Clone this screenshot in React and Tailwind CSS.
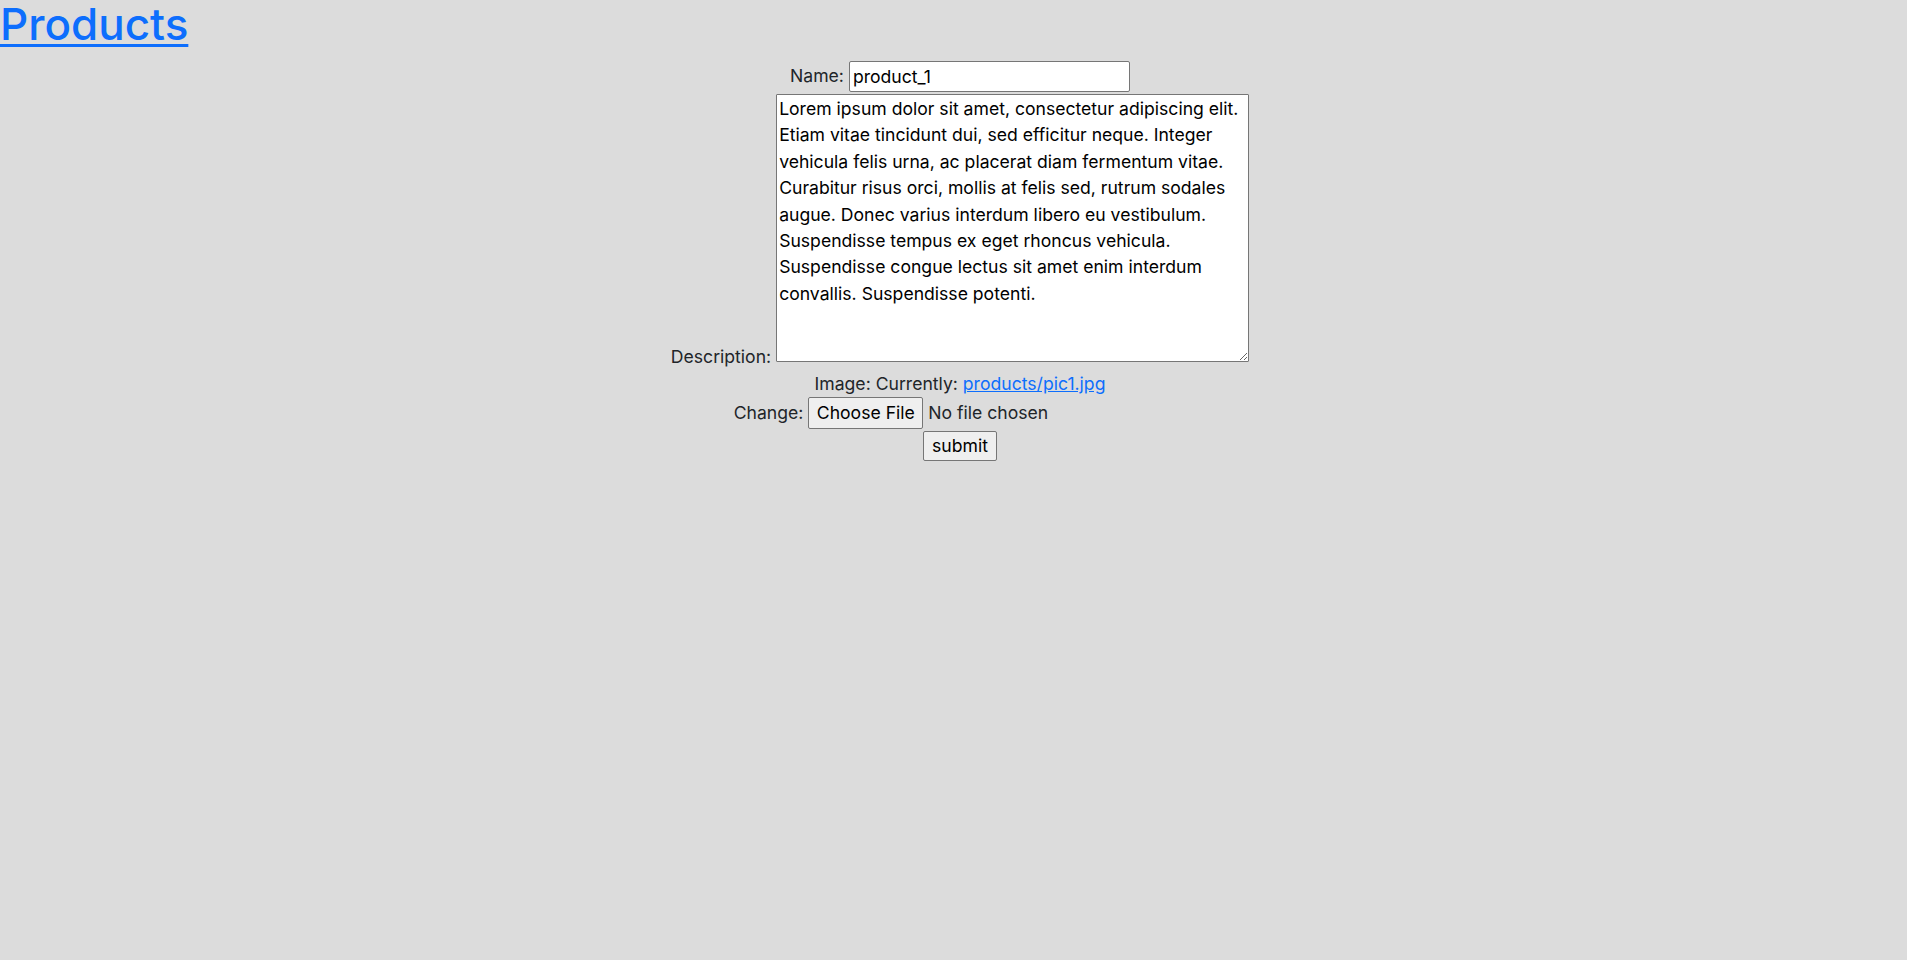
export default function App() {
  const lorem =
    'Lorem ipsum dolor sit amet, consectetur adipiscing elit. Etiam vitae tincidunt dui, sed efficitur neque. Integer vehicula felis urna, ac placerat diam fermentum vitae. Curabitur risus orci, mollis at felis sed, rutrum sodales augue. Donec varius interdum libero eu vestibulum. Suspendisse tempus ex eget rhoncus vehicula. Suspendisse congue lectus sit amet enim interdum convallis. Suspendisse potenti.';

  return (
    <div className="min-h-screen bg-[#dcdcdc] text-[#212529] text-[17.6px] leading-[1.5] font-['Inter','Liberation_Sans',sans-serif]">
      <h1 className="text-[44px] leading-[48px] font-medium m-0">
        <a href="#" className="text-[#0d6efd] underline decoration-[3px] underline-offset-[4px]">
          Products
        </a>
      </h1>

      <form className="flex flex-col items-center mt-[13px] pl-[13px]">
        {/* name */}
        <div className="flex items-center gap-[5px]">
          <label>Name:</label>
          <input
            type="text"
            defaultValue="product_1"
            className="w-[281px] h-[31px] bg-white text-black border border-[#767676] rounded-[2px] px-[3px] outline-none"
          />
        </div>

        {/* description */}
        <div className="flex items-end gap-[5px] mt-[2px]">
          <label className="leading-[21px] mb-[-5px]">Description:</label>
          <textarea
            defaultValue={lorem}
            rows={10}
            className="w-[473px] h-[268px] bg-white text-black border border-[#767676] rounded-[1px] px-[2px] py-px leading-[26.4px] outline-none resize-y"
          />
        </div>

        {/* image */}
        <div className="mt-[9px] leading-[26.4px]">
          Image: Currently:{' '}
          <a href="#" className="text-[#0d6efd] underline">
            products/pic1.jpg
          </a>
        </div>
        <div className="flex items-center gap-[5px] h-[32px]">
          <span>Change:</span>
          <div className="flex items-center gap-[5px] w-[378px]">
            <button
              type="button"
              className="w-[115px] h-[32px] bg-[#efefef] text-black border border-[#767676] rounded-[2px]"
            >
              Choose File
            </button>
            <span>No file chosen</span>
          </div>
        </div>
        <button
          type="button"
          className="mt-[2px] w-[74px] h-[30px] bg-[#efefef] text-black border border-[#767676] rounded-[2px]"
        >
          submit
        </button>
      </form>
    </div>
  );
}
